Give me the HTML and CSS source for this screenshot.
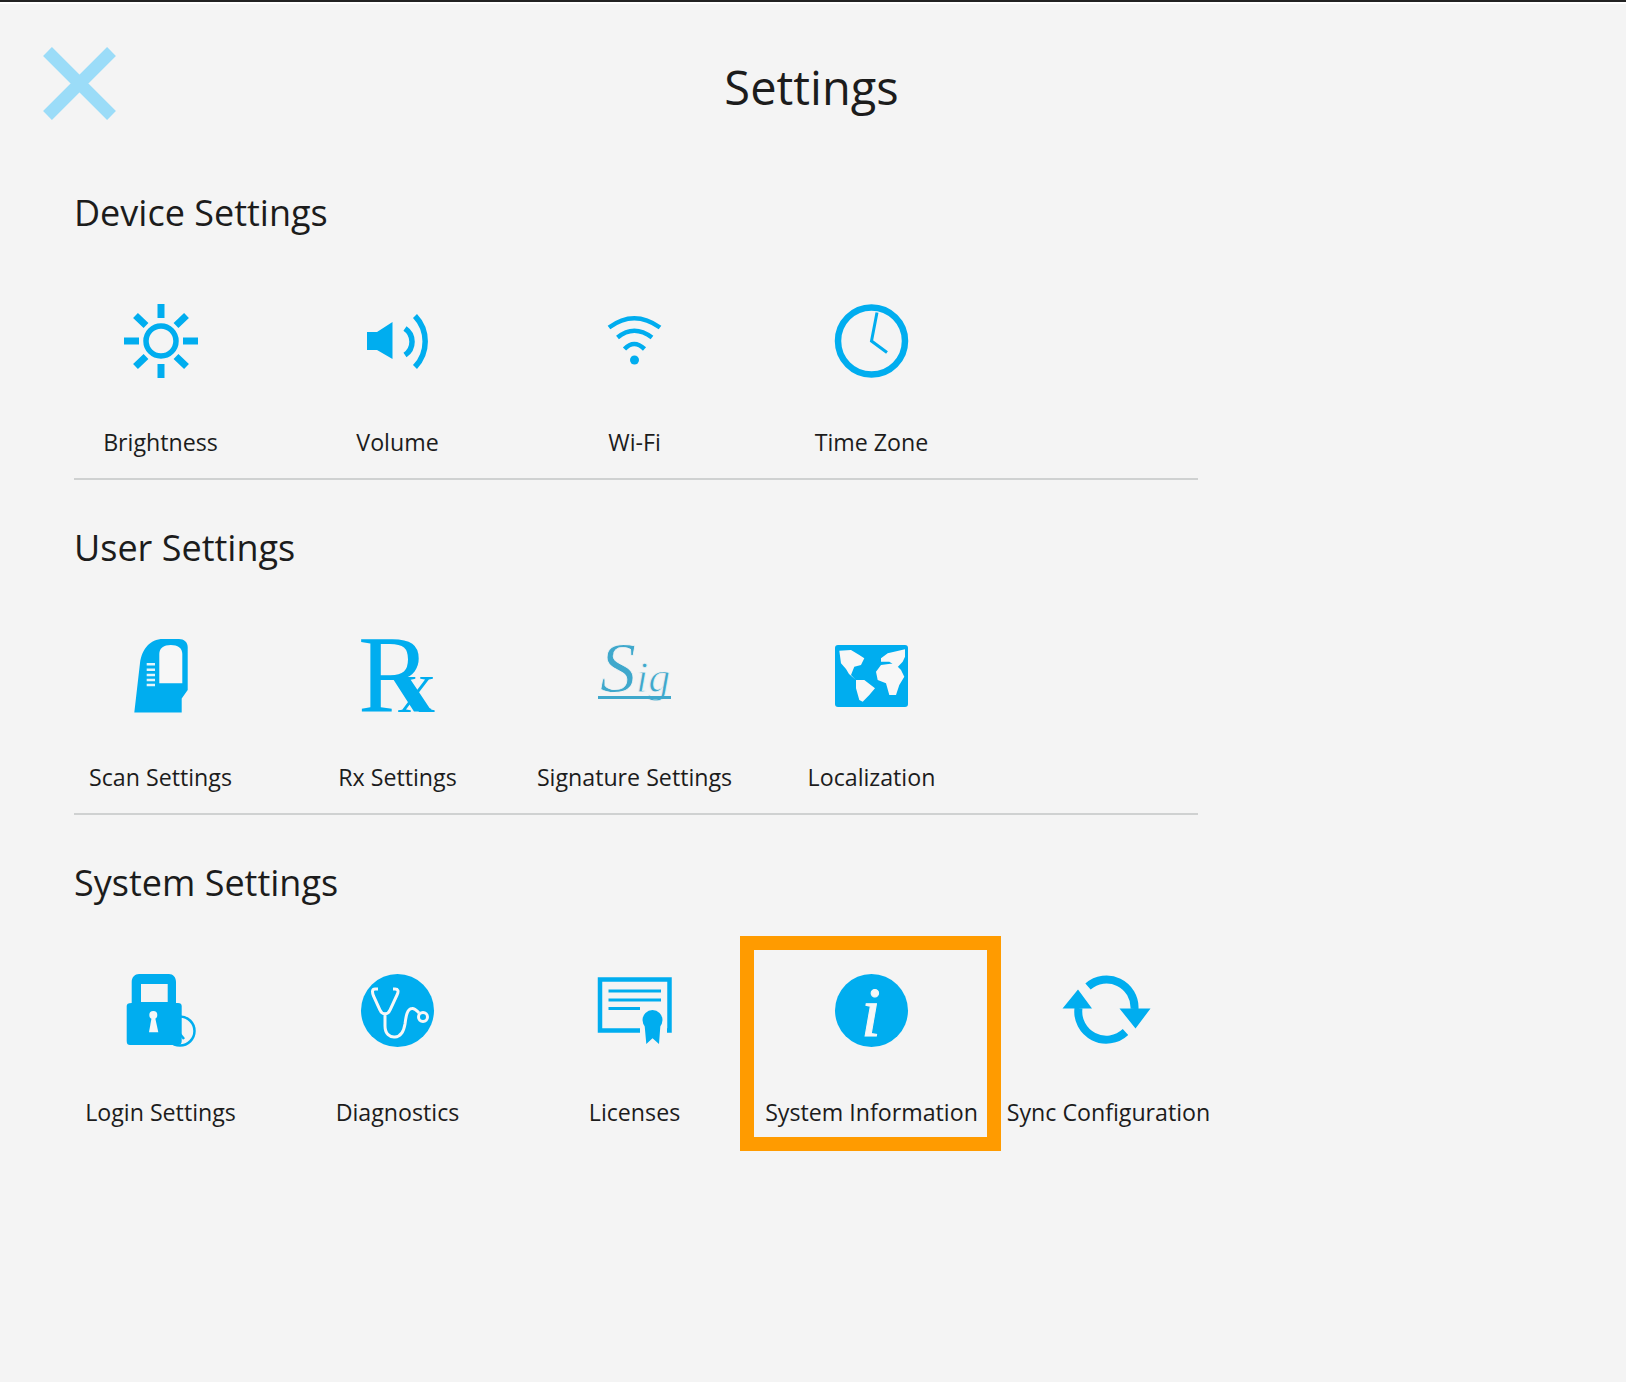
FILE: index.html
```html
<!DOCTYPE html>
<html lang="en">
<head>
<meta charset="utf-8">
<title>Settings</title>
<link rel="stylesheet" href="styles.css">
</head>
<body>
<div class="page">
  <header class="header">
    <button class="close" aria-label="Close">
      <svg class="close-icon" viewBox="0 0 73 73"><path d="M4.5 4.5 68.5 68.5M68.5 4.5 4.5 68.5"/></svg>
    </button>
    <h1 class="title">Settings</h1>
  </header>

  <section class="section">
    <h2 class="heading">Device Settings</h2>
    <div class="row">
      <div class="item">
        <svg class="icon" viewBox="0 0 74 74"><circle class="s5" cx="37" cy="37" r="15"/><path class="s7" d="M37 0V14M37 60V74M0 37H15M59 37H74M11.5 11.5 22 21.500M52 21.500 62.500 11.500M11.500 62.500 22 52.500M52 52.500 62.500 62.500"/></svg>
        <span class="label">Brightness</span>
      </div>
      <div class="item">
        <svg class="icon" viewBox="0 0 74 74"><path class="f" d="M6 28H16L31.500 18V55L16 46H6Z"/><path class="s5" d="M44 24.500A16 16 0 0 1 44 51M54 12A37 37 0 0 1 54 63"/></svg>
        <span class="label">Volume</span>
      </div>
      <div class="item">
        <svg class="icon" viewBox="0 0 74 74"><path class="s4" d="M11 23.500Q36 5 62 23.500M19.500 33.500Q36 20 54 33.500M26.500 45Q36 35 46.500 45"/><circle class="f" cx="36.500" cy="56" r="4.500"/></svg>
        <span class="label">Wi-Fi</span>
      </div>
      <div class="item">
        <svg class="icon" viewBox="0 0 74 74"><circle class="s6" cx="36.500" cy="37" r="33.500"/><path class="s3" d="M42 8.500 36.500 37 52 48.500"/></svg>
        <span class="label">Time Zone</span>
      </div>
    </div>
    <hr class="rule">
  </section>

  <section class="section">
    <h2 class="heading">User Settings</h2>
    <div class="row">
      <div class="item">
        <svg class="icon" viewBox="0 0 74 74"><path class="f" d="M10.300 73.500H57.700V59.500L63.700 51V8C63.700 3 60 0 55 0H39C26 0 18 10 16 24Z"/><path class="w" d="M35.300 44.300V15C35.300 9 40 6 46.800 6S58.300 9 58.300 15V44.300Z"/><path class="ws" d="M22.700 25.300H31M22.700 30.700H31M22.700 36H31M22.700 41H31M22.700 46H31"/></svg>
        <span class="label">Scan Settings</span>
      </div>
      <div class="item">
        <svg class="icon" viewBox="0 0 74 74"><text class="rx-r" x="-3" y="73">R<tspan class="rx-x" dx="-34">x</tspan></text></svg>
        <span class="label">Rx Settings</span>
      </div>
      <div class="item">
        <svg class="icon" viewBox="0 0 74 74"><text class="sig" x="2" y="53">S<tspan class="sig-small">ig</tspan></text><path class="sig-line" d="M0 58.500H73"/></svg>
        <span class="label">Signature Settings</span>
      </div>
      <div class="item">
        <svg class="icon" viewBox="0 0 74 74"><rect class="f" x="0" y="6" width="73" height="62" rx="3"/><path class="w" d="M4.300 11.700 16 11 24.300 16 29.300 19.300 26 26 19.300 27.700 16 36 21 41 14 35 11 30 6 24.300ZM21 41H29.300L40 49.300 34.300 56 27.700 62.700 24.300 61 21 49.300ZM41 32.700 46 26 59.300 24.300 66 31 69.300 37.700 64.300 46 61 56H54.300L51 44.300 42.700 41ZM46 19.300 52.700 14.300 70 10.300V17.700L67.700 22.700 62.700 28 54.300 22.700H46Z"/></svg>
        <span class="label">Localization</span>
      </div>
    </div>
    <hr class="rule">
  </section>

  <section class="section">
    <h2 class="heading">System Settings</h2>
    <div class="row">
      <div class="item">
        <svg class="icon" viewBox="0 0 74 74"><circle class="s2" cx="56" cy="57" r="14.500"/><path class="s2" d="M56 60 60 65"/><path class="f" fill-rule="evenodd" d="M7.700 29V8C7.700 3 11 0 15 0H45C49 0 52 3 52 8V29H54C56.500 29 57.700 30 57.700 32V67C57.700 70 56 71 54 71H6C4 71 2.700 70 2.700 67V32C2.700 30 4 29 7.700 29ZM17 10V28H43.700V10Z"/><circle class="w" cx="29.300" cy="41" r="4"/><path class="w" d="M27.700 43H31L34.300 58.300H25Z"/></svg>
        <span class="label">Login Settings</span>
      </div>
      <div class="item">
        <svg class="icon" viewBox="0 0 74 74"><circle class="f" cx="36.500" cy="36.500" r="36.500"/><path class="ws3" d="M17 15H14C11 15 11 18 12.500 22L19 36C21 41 27 41 29 36L36 21C38 17 37 15 34 15H32M24 40V52C24 60 29 63.500 34 63 41 62.500 43 56 44 50 45 42 46 35 51 34.500 54 34 56 37 58 39"/><circle class="ws3" cx="62" cy="43" r="4.500"/></svg>
        <span class="label">Diagnostics</span>
      </div>
      <div class="item">
        <svg class="icon" viewBox="0 0 74 74"><path class="s4" d="M42 56.500H2V5.500H71.500V56.500H69"/><path class="s3" d="M10.500 17H63M10.500 26H63M10.500 34.500H42"/><circle class="f" cx="54.500" cy="46" r="10"/><path class="f" d="M46.500 50H62.500L61 70 54.500 64.300 48.300 70Z"/></svg>
        <span class="label">Licenses</span>
      </div>
      <div class="item item-marked">
        <svg class="icon" viewBox="0 0 74 74"><circle class="f" cx="36.500" cy="36.500" r="36.500"/><text class="info" x="36" y="62">i</text></svg>
        <span class="label">System Information</span>
        <span class="marker"></span>
      </div>
      <div class="item">
        <svg class="icon" viewBox="0 0 74 74"><path class="s8" d="M16 12.500A28 28 0 0 1 62.500 35M6.500 34A28 28 0 0 0 53.500 58"/><path class="f" d="M-9.500 34.500H20L6 15.500ZM47.500 34.500H78.500L63.500 54.500Z"/></svg>
        <span class="label">Sync Configuration</span>
      </div>
    </div>
  </section>
</div>
</body>
</html>
```
FILE: styles.css
```css
* { box-sizing: border-box; }
html, body { margin: 0; padding: 0; }
body {
  background: #f4f4f4;
  color: #1c1c1c;
  font-family: "Open Sans", "Noto Sans", sans-serif;
}
.page {
  height: 1382px;
  border-top: 2px solid #222;
  box-shadow: inset 0 2px 0 #fff;
  overflow: hidden;
}
.header {
  display: grid;
  grid-template-columns: 1fr auto 1fr;
  height: 186px;
  padding: 45px 46px 0 43px;
  align-items: start;
}
.close { background: none; border: 0; padding: 0; width: 73px; height: 73px; }
.close-icon { display: block; width: 73px; height: 73px; }
.close-icon path { fill: none; stroke: #9bdcf8; stroke-width: 12.5; }
.title {
  margin: 0;
  font-size: 47px;
  font-weight: 400;
  line-height: 80px;
}
.section { padding-left: 42px; width: 1198px; height: 335px; }
.heading {
  margin: 0 0 66px 32px;
  font-size: 36px;
  font-weight: 400;
  line-height: 50px;
}
.row { display: flex; }
.item {
  position: relative;
  flex: 0 0 237px;
  display: flex;
  flex-direction: column;
  align-items: center;
  white-space: nowrap;
}
.icon { display: block; width: 74px; height: 74px; overflow: visible; }
.label { margin-top: 48px; font-size: 23.200px; line-height: 32px; }
.rule { margin: 20px 0 0 32px; border: 0; height: 2px; background: #cfd1d1; }
.marker {
  position: absolute;
  left: -13px; right: -11px; top: -38px; bottom: -23px;
  border: 14px solid #ff9b00;
}
.f { fill: #00adef; }
.w { fill: #f7f7f7; }
.s2, .s3, .s4, .s5, .s6, .s7, .s8 { fill: none; stroke: #00adef; }
.s2 { stroke-width: 2.500; }
.s3 { stroke-width: 3; }
.s4 { stroke-width: 4.500; }
.s5 { stroke-width: 5.500; }
.s6 { stroke-width: 6.500; }
.s7 { stroke-width: 7; }
.s8 { stroke-width: 8; }
.ws { fill: none; stroke: #e3f5fc; stroke-width: 2.500; }
.ws3 { fill: none; stroke: #f7f7f7; stroke-width: 3; }
.rx-r { fill: #00adef; font-family: "Liberation Serif", serif; font-size: 110px; }
.rx-x { font-size: 76px; }
.sig {
  fill: #3fa8cc;
  stroke: #f4f4f4;
  stroke-width: 0.800px;
  font-family: "Liberation Serif", serif;
  font-style: italic;
  font-size: 72px;
}
.sig-small { font-size: 44px; }
.sig-line { fill: none; stroke: #3fa8cc; stroke-width: 3; }
.info {
  fill: #f7f7f7;
  stroke: #f7f7f7;
  stroke-width: 1px;
  font-family: "Liberation Serif", serif;
  font-style: italic;
  font-size: 70px;
  text-anchor: middle;
}
```
